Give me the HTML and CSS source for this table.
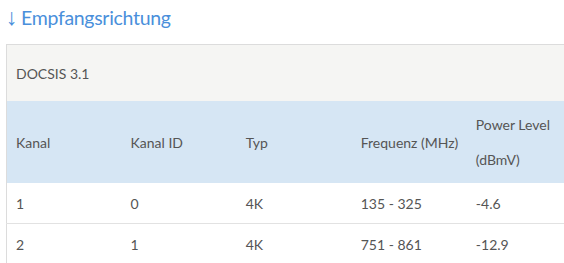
FILE: index.html
```html
<!DOCTYPE html>
<html lang="de">
<head>
<meta charset="utf-8">
<link rel="stylesheet" href="styles.css">
</head>
<body>
<h2 class="section-title"><span class="arrow">↓</span>Empfangsrichtung</h2>
<table class="channels">
  <colgroup>
    <col class="c"><col class="c"><col class="c"><col class="c"><col class="c">
  </colgroup>
  <tbody>
    <tr class="group-row"><td colspan="5">DOCSIS 3.1</td></tr>
    <tr class="head-row">
      <th>Kanal</th>
      <th>Kanal ID</th>
      <th>Typ</th>
      <th>Frequenz (MHz)</th>
      <th>Power Level<br>(dBmV)</th>
    </tr>
    <tr class="data-row">
      <td class="strong">1</td><td>0</td><td>4K</td><td>135 - 325</td><td>-4.6</td>
    </tr>
    <tr class="data-row">
      <td class="strong">2</td><td>1</td><td>4K</td><td>751 - 861</td><td>-12.9</td>
    </tr>
  </tbody>
</table>
</body>
</html>
```
FILE: styles.css
```css
html, body {
  margin: 0;
  padding: 0;
  background: #ffffff;
  overflow: hidden;
}
body {
  padding: 0 0 0 6px;
  font-family: Lato, "Open Sans", sans-serif;
  color: #555;
}
.section-title {
  display: flex;
  align-items: baseline;
  margin: 0;
  padding: 5px 0 0 1px;
  height: 44px;
  box-sizing: border-box;
  font-size: 19.5px;
  letter-spacing: -0.3px;
  font-weight: 400;
  color: #4a8fdb;
  line-height: 24px;
}
.arrow {
  display: inline-block;
  width: 15px;
  font-family: "Liberation Sans", sans-serif;
  font-size: 23px;
  letter-spacing: 0;
  margin-left: -1px;
}
.channels {
  border-collapse: collapse;
  table-layout: fixed;
  width: 576px;
  border-left: 1px solid #dcdcdc;
  border-top: 1px solid #dcdcdc;
  font-size: 14px;
}
.channels col.c { width: 115px; }
.channels td, .channels th {
  padding: 0 0 0 9px;
  text-align: left;
  font-weight: 400;
  vertical-align: middle;
}
.group-row td {
  background: #f5f5f3;
  height: 56px;
}
.head-row th {
  background: #d6e6f4;
  height: 82px;
  line-height: 35px;
}
.data-row td {
  height: 40px;
  border-bottom: 1px solid #e2e2e2;
}
.strong { font-weight: 700; }
```
